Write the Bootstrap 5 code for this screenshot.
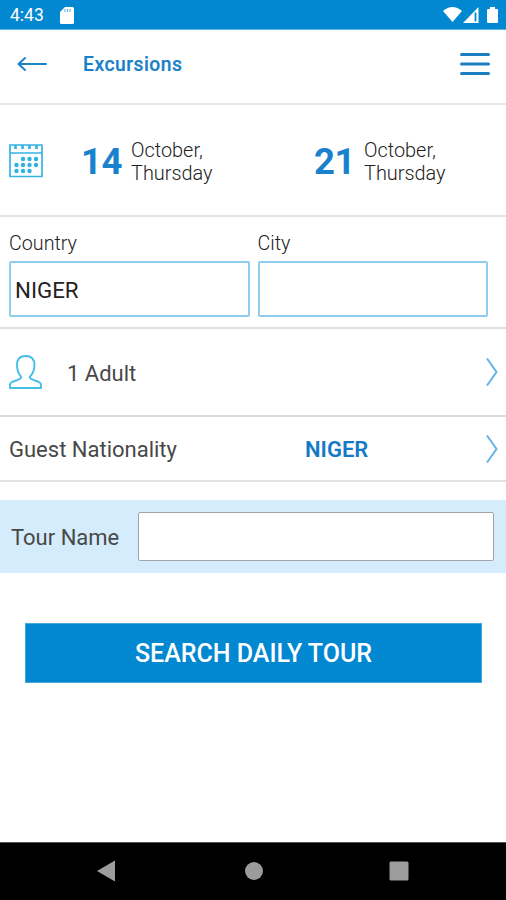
<!DOCTYPE html>
<html lang="en">
<head>
<meta charset="utf-8">
<meta name="viewport" content="width=device-width, initial-scale=1">
<title>Excursions</title>
<link href="https://cdn.jsdelivr.net/npm/bootstrap@5.3.0/dist/css/bootstrap.min.css" rel="stylesheet">
<style>
body{font-family:Roboto,"Liberation Sans",sans-serif;color:#484848;background:#fff;width:506px;height:900px;overflow:hidden;line-height:1}
svg{display:block;flex:none}
.status-strip{height:30px;background:#0288d1;color:#fff;font-size:17.5px;padding:3px 8px 0 10px;border-bottom:1px solid #5fb0e0}
.status-strip svg{margin-top:-2px}
.app-head{height:75px;border-bottom:2px solid #e6e6e6;padding:0 16px 5px 17px}
.app-title{font-size:19.3px;font-weight:500;color:#1a80ca;letter-spacing:.5px;margin:2px 0 0 35px;-webkit-text-stroke:.2px #1a80ca}
.date-row{height:112px;border-bottom:2px solid #e2e2e2;padding:1px 0 0 9px}
.date-num{font-size:36.5px;font-weight:700;color:#1a82cd;width:50px;letter-spacing:-.5px;padding-top:3px}
.date-text{font-size:19.9px;font-weight:300;line-height:23px;color:#222;padding-top:2px}
.date-from{margin-left:37px;width:233px}
.place-row{height:112px;border-bottom:2px solid #e0e0e0;padding:16px 19px 0 9px;gap:8px}
.place-row label{font-size:19.7px;font-weight:300;color:#222;line-height:20px;padding-top:1px;margin-bottom:7px;display:block}
.place-row .form-control{height:56px;border:2px solid #8fcdee;border-radius:2px;padding:1px 4px 0;font-size:22.3px;color:#222;box-shadow:none}
.country-col{width:240.5px;flex:none}
.city-col{width:230px;flex:none}
.adult-row{height:88px;border-bottom:2px solid #dcdcdc;padding:0 8px 0 9px}
.nation-row{height:65px;border-bottom:2px solid #e2e2e2;padding:0 8px 0 9px}
.row-text{font-size:22px;color:#484848;padding-top:2px}
.nation-name{width:296px}
.nation-value{font-size:22px;font-weight:600;color:#147ac8;padding-top:2px}
.adult-count{padding-top:3px}
.tour-row{height:73px;margin-top:18px;background:#d4ecfb;padding:0 12px 0 11px}
.tour-row label{width:127px}
.tour-row .form-control{height:49px;border:1px solid #a3a3ab;border-radius:2px;box-shadow:none}
.btn-search{height:60px;margin:50px 24px 0 25px;background:#0288d1;color:#fff;border:1px solid #4aa6dc;border-radius:0;font-size:25px;font-weight:500;line-height:1;padding:1px 0 0}
.sys-nav{height:58px;background:#000;border-top:1px solid #555;padding:0 97px 2px}
.home-dot{margin-left:3px}
</style>
</head>
<body class="d-flex flex-column">
<div class="status-strip d-flex align-items-center">
  <span>4:43</span>
  <svg class="ms-3" width="14" height="17" viewBox="0 0 14 17"><path d="M5 0h7.500q1.500 0 1.500 1.500v14q0 1.500-1.500 1.500h-11q-1.500 0-1.500-1.500V5z" fill="#fff"/><path d="M5 2v3M7.500 2v3M10 2v3" stroke="#6bb8e4" stroke-width="1.200"/></svg>
  <svg class="ms-auto" width="55" height="18" viewBox="0 0 55 18"><path d="M0 5Q9.500-3 19 5L9.500 16z" fill="#fff"/><path d="M20 17L35.500 1v16z" fill="#fff"/><path d="M32.500 6.500v9" stroke="#0288d1" stroke-width="1.800"/><path d="M47 1h5v2h2q1 0 1 1v12q0 1-1 1h-9q-1 0-1-1V4q0-1 1-1h2z" fill="#fff"/></svg>
</div>
<header class="app-head d-flex align-items-center">
  <svg width="31" height="16" viewBox="0 0 31 16" fill="none" stroke="#1b82c6" stroke-width="2" stroke-linecap="round" stroke-linejoin="round"><path d="M29 8H2M8 2L1.500 8L8 14"/></svg>
  <h1 class="app-title">Excursions</h1>
  <svg class="ms-auto" width="30" height="24" viewBox="0 0 30 24" stroke="#1b7fc2" stroke-width="3" stroke-linecap="round"><path d="M1.500 2.500h27M1.500 12h27M1.500 21.500h27"/></svg>
</header>
<main class="d-flex flex-column">
  <section class="date-row d-flex align-items-center">
    <svg width="35" height="34" viewBox="0 0 35 34"><path d="M1 1h32v31.500H1zM1 9h32" fill="none" stroke="#35b3e3" stroke-width="1.700"/><path d="M6.500 1v4M13.500 1v4M20.500 1v4M27.500 1v4" stroke="#35b3e3" stroke-width="2.600"/><g fill="#2fb1e2"><circle cx="14" cy="15" r="2.200"/><circle cx="20.500" cy="15" r="2.200"/><circle cx="27" cy="15" r="2.200"/><circle cx="7.500" cy="21" r="2.200"/><circle cx="14" cy="21" r="2.200"/><circle cx="20.500" cy="21" r="2.200"/><circle cx="27" cy="21" r="2.200"/><circle cx="7.500" cy="27" r="2.200"/><circle cx="14" cy="27" r="2.200"/><circle cx="20.500" cy="27" r="2.200"/></g></svg>
    <div class="date-from d-flex align-items-center"><span class="date-num">14</span><span class="date-text">October,<br>Thursday</span></div>
    <div class="d-flex align-items-center"><span class="date-num">21</span><span class="date-text">October,<br>Thursday</span></div>
  </section>
  <section class="place-row d-flex">
    <div class="country-col"><label for="country">Country</label><input id="country" class="form-control" value="NIGER"></div>
    <div class="city-col"><label for="city">City</label><input id="city" class="form-control"></div>
  </section>
  <section class="adult-row d-flex align-items-center">
    <svg width="34" height="36" viewBox="0 0 34 36" fill="none" stroke="#45bfe8" stroke-width="1.900" stroke-linejoin="round"><path d="M12.300 23C9 19.500 8 16 8 11C8 5 11 2 16.500 2S25.500 5 25.500 11C25.500 16 24 19.500 20.700 23Q21 24.500 23 25.300L30 28Q32 29 32 31V34H1V31Q1 29 3 28L10 25.300Q12 24.500 12.300 23z"/></svg>
    <span class="row-text adult-count ps-4">1 Adult</span>
    <svg class="ms-auto" width="12" height="28" viewBox="0 0 12 28" fill="none" stroke="#62b5e5" stroke-width="2"><path d="M1 0.500L10.500 14L1 27.500"/></svg>
  </section>
  <section class="nation-row d-flex align-items-center">
    <span class="row-text nation-name">Guest Nationality</span>
    <span class="nation-value">NIGER</span>
    <svg class="ms-auto" width="12" height="28" viewBox="0 0 12 28" fill="none" stroke="#62b5e5" stroke-width="2"><path d="M1 0.500L10.500 14L1 27.500"/></svg>
  </section>
  <section class="tour-row d-flex align-items-center">
    <label class="row-text flex-shrink-0" for="tour">Tour Name</label>
    <input id="tour" class="form-control">
  </section>
  <button type="button" class="btn btn-search">SEARCH DAILY TOUR</button>
</main>
<nav class="sys-nav d-flex align-items-center justify-content-between mt-auto">
  <svg width="18" height="22" viewBox="0 0 18 22"><path d="M0 11L18 0.500v21z" fill="#9c9c9c"/></svg>
  <svg class="home-dot" width="18" height="18" viewBox="0 0 18 18"><circle cx="9" cy="9" r="9" fill="#9c9c9c"/></svg>
  <svg width="20" height="20" viewBox="0 0 20 20"><rect x=".5" y=".5" width="19" height="19" rx="1.500" fill="#9c9c9c"/></svg>
</nav>
<script src="https://cdn.jsdelivr.net/npm/bootstrap@5.3.0/dist/js/bootstrap.bundle.min.js"></script>
</body>
</html>
